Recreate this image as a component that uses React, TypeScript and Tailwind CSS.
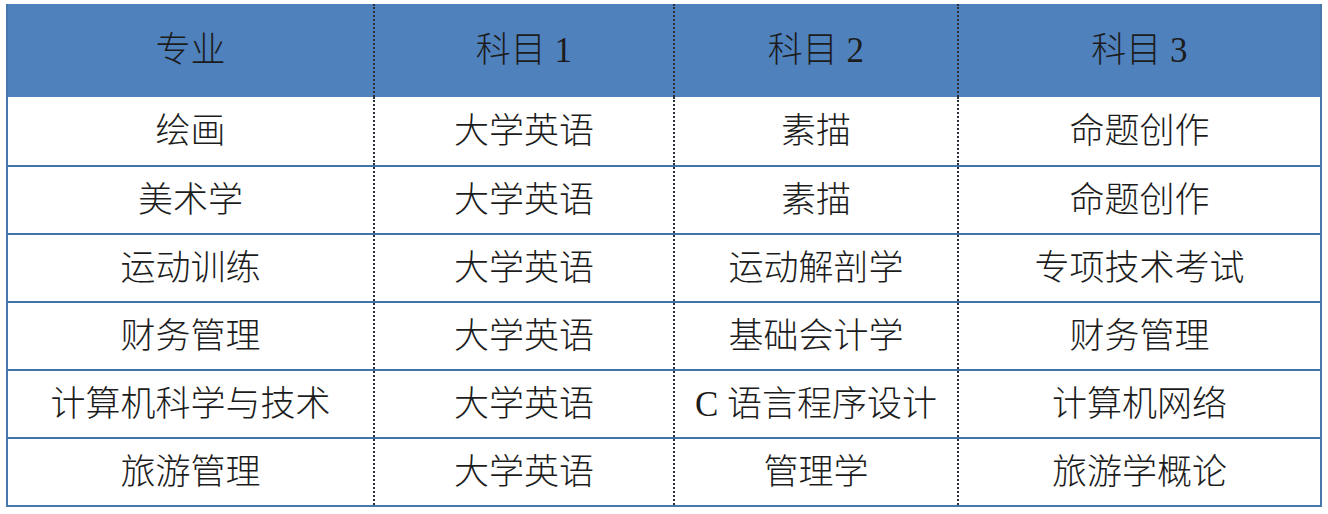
const header = ['专业', '科目 1', '科目 2', '科目 3'];

const rows = [
  ['绘画', '大学英语', '素描', '命题创作'],
  ['美术学', '大学英语', '素描', '命题创作'],
  ['运动训练', '大学英语', '运动解剖学', '专项技术考试'],
  ['财务管理', '大学英语', '基础会计学', '财务管理'],
  ['计算机科学与技术', '大学英语', 'C 语言程序设计', '计算机网络'],
  ['旅游管理', '大学英语', '管理学', '旅游学概论'],
];

const cols = 'grid grid-cols-[365px_300px_284px_363px]';

function Cell({ text, first }: { text: string; first: boolean }) {
  return (
    <div
      className={`flex items-center justify-center pt-[2px] ${first ? '' : 'border-l-2 border-dotted border-[#2a2f3a]'}`}
    >
      {text}
    </div>
  );
}

export default function App() {
  return (
    <div className="w-[1328px] h-[514px] bg-white pt-[4px] pl-[6px]">
      <div
        className="w-[1316px] border-x-2 border-b-2 border-[#4677ad] text-[35px] text-[#1c1c1c] font-light"
        style={{ fontFamily: '"Liberation Serif", "Noto Sans CJK SC", serif' }}
      >
        <div className={`${cols} h-[93px] bg-[#4f81bd]`}>
          {header.map((h, i) => (
            <Cell key={h} text={h} first={i === 0} />
          ))}
        </div>
        {rows.map((r, ri) => (
          <div
            key={ri}
            className={`${cols} h-[68px] ${ri === 0 ? '' : 'border-t-2 border-[#3f75ad]'}`}
          >
            {r.map((c, i) => (
              <Cell key={i} text={c} first={i === 0} />
            ))}
          </div>
        ))}
      </div>
    </div>
  );
}
